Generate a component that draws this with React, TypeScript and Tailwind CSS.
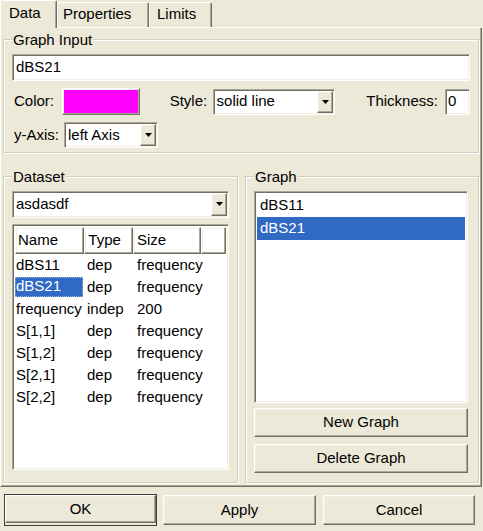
import React from "react";

const sunken =
  "border border-t-[#aca899] border-l-[#aca899] border-b-white border-r-white shadow-[inset_1px_1px_0_#716f64,inset_-1px_-1px_0_#f1efe2]";
const raised =
  "border border-t-white border-l-white border-b-[#716f64] border-r-[#716f64] shadow-[inset_-1px_-1px_0_#aca899,inset_1px_1px_0_#f1efe2]";

function Arrow() {
  return (
    <svg width="7" height="4" viewBox="0 0 7 4">
      <path d="M0 0h7L3.5 4z" fill="#000" />
    </svg>
  );
}

function Combo({ text, className }: { text: string; className: string }) {
  return (
    <div className={`${sunken} bg-white flex items-stretch ${className}`}>
      <span className="flex-1 flex items-center pl-[3px] whitespace-nowrap overflow-hidden">{text}</span>
      <div className={`${raised} bg-[#ece9d8] w-[16px] m-[1px] flex items-center justify-center`}>
        <Arrow />
      </div>
    </div>
  );
}

function Button({ label, className }: { label: string; className: string }) {
  return (
    <div className={`${raised} bg-[#ece9d8] flex items-center justify-center ${className}`}>{label}</div>
  );
}

const rows: [string, string, string][] = [
  ["dBS11", "dep", "frequency"],
  ["dBS21", "dep", "frequency"],
  ["frequency", "indep", "200"],
  ["S[1,1]", "dep", "frequency"],
  ["S[1,2]", "dep", "frequency"],
  ["S[2,1]", "dep", "frequency"],
  ["S[2,2]", "dep", "frequency"],
];

const fieldset =
  "border border-[#d0d0bf] shadow-[1px_1px_0_white,inset_1px_1px_0_white] px-[8px] m-0 min-w-0";
const legend = "px-[1px] leading-[17px] bg-[#ece9d8]";

export default function App() {
  return (
    <div className="w-[483px] h-[531px] bg-[#ece9d8] text-[15px] text-black font-['Liberation_Sans',Arial,sans-serif] flex flex-col overflow-hidden select-none">
      {/* tabs */}
      <div className="flex items-end h-[27px] relative z-10">
        <div className="w-[57px] h-[28px] -mb-[1px] bg-[#ece9d8] border-l border-t border-l-white border-t-white border-r border-r-[#716f64] shadow-[inset_-1px_0_0_#aca899] rounded-t-[2px] flex items-start pt-[1px] pl-[8px]">
          Data
        </div>
        <div className="w-[92px] h-[25px] bg-[#ece9d8] border-l border-t border-l-white border-t-white border-r border-r-[#716f64] shadow-[inset_-1px_0_0_#aca899] rounded-t-[2px] flex items-start pt-0 pl-[5px]">
          Properties
        </div>
        <div className="w-[63px] h-[25px] bg-[#ece9d8] border-l border-t border-l-white border-t-white border-r border-r-[#716f64] shadow-[inset_-1px_0_0_#aca899] rounded-t-[2px] flex items-start pt-0 pl-[7px]">
          Limits
        </div>
      </div>

      {/* panel */}
      <div className="w-[482px] h-[460px] border border-t-white border-l-white border-b-[#716f64] border-r-[#716f64] shadow-[inset_-1px_-1px_0_#aca899] pl-[2px] pt-[3px] flex flex-col">
        <fieldset className={`${fieldset} w-[476px] pb-[4px]`}>
          <legend className={legend}>Graph Input</legend>
          <div className={`${sunken} bg-white h-[27px] mt-[6px] flex items-center pl-[3px]`}>dBS21</div>
          <div className="flex items-center h-[27px] mt-[7px]">
            <span className="w-[50px] pl-[2px]">Color:</span>
            <div className={`${raised} bg-[#ff00ff] w-[78px] h-[27px]`} />
            <span className="w-[43px] ml-[30px]">Style:</span>
            <Combo text="solid line" className="w-[123px] h-[26px]" />
            <span className="w-[79px] ml-[31px]">Thickness:</span>
            <div className={`${sunken} bg-white w-[25px] h-[26px] flex items-center pl-[2px]`}>0</div>
          </div>
          <div className="flex items-center h-[26px] mt-[7px]">
            <span className="w-[52px] pl-[2px]">y-Axis:</span>
            <Combo text="left Axis" className="w-[94px] h-[26px]" />
          </div>
        </fieldset>

        <div className="flex gap-[7px] mt-[15px]">
          <fieldset className={`${fieldset} w-[235px] h-[315px] pb-[12px] flex flex-col`}>
            <legend className={legend}>Dataset</legend>
            <Combo text="asdasdf" className="h-[27px] mt-[6px]" />
            <div className={`${sunken} bg-white mt-[6px] w-[217px] h-[247px] p-[2px] flex flex-col`}>
              <div className="flex h-[27px]">
                <div className={`${raised} w-[70px] pl-[2px] flex items-center`}>Name</div>
                <div className={`${raised} w-[49px] pl-[3px] flex items-center`}>Type</div>
                <div className={`${raised} w-[69px] pl-[3px] flex items-center`}>Size</div>
                <div className={`${raised} w-[25px]`} />
              </div>
              {rows.map(([n, t, s], i) => (
                <div key={n} className="flex h-[22px] items-center whitespace-nowrap">
                  <div className="w-[70px] overflow-hidden">
                    {i === 1 ? (
                      <span className="block w-[68px] h-[20px] leading-[18px] bg-[#316ac5] text-white outline-1 outline-dotted outline-[#9ab0d8] -outline-offset-1 pl-[1px]">
                        {n}
                      </span>
                    ) : (
                      <span className="pl-[1px]">{n}</span>
                    )}
                  </div>
                  <div className="w-[49px] pl-[2px]">{t}</div>
                  <div className="w-[69px] pl-[3px]">{s}</div>
                </div>
              ))}
            </div>
          </fieldset>

          <fieldset className={`${fieldset} w-[234px] h-[315px] pb-[9px] flex flex-col`}>
            <legend className={legend}>Graph</legend>
            <div className={`${sunken} bg-white mt-[6px] w-[214px] h-[212px] p-[2px] flex flex-col`}>
              <div className="h-[23px] flex items-center pl-[3px]">dBS11</div>
              <div className="h-[23px] flex items-center pl-[3px] bg-[#316ac5] text-white">dBS21</div>
            </div>
            <Button label="New Graph" className="w-[214px] h-[29px] mt-[5px]" />
            <Button label="Delete Graph" className="w-[214px] h-[29px] mt-[7px]" />
          </fieldset>
        </div>
      </div>

      {/* bottom buttons */}
      <div className="flex pl-[5px] gap-[7px] mt-[8px]">
        <div className="outline outline-1 outline-[#404040]">
          <Button label="OK" className="w-[151px] h-[28px]" />
        </div>
        <Button label="Apply" className="w-[153px] h-[30px]" />
        <Button label="Cancel" className="w-[152px] h-[30px]" />
      </div>
    </div>
  );
}
